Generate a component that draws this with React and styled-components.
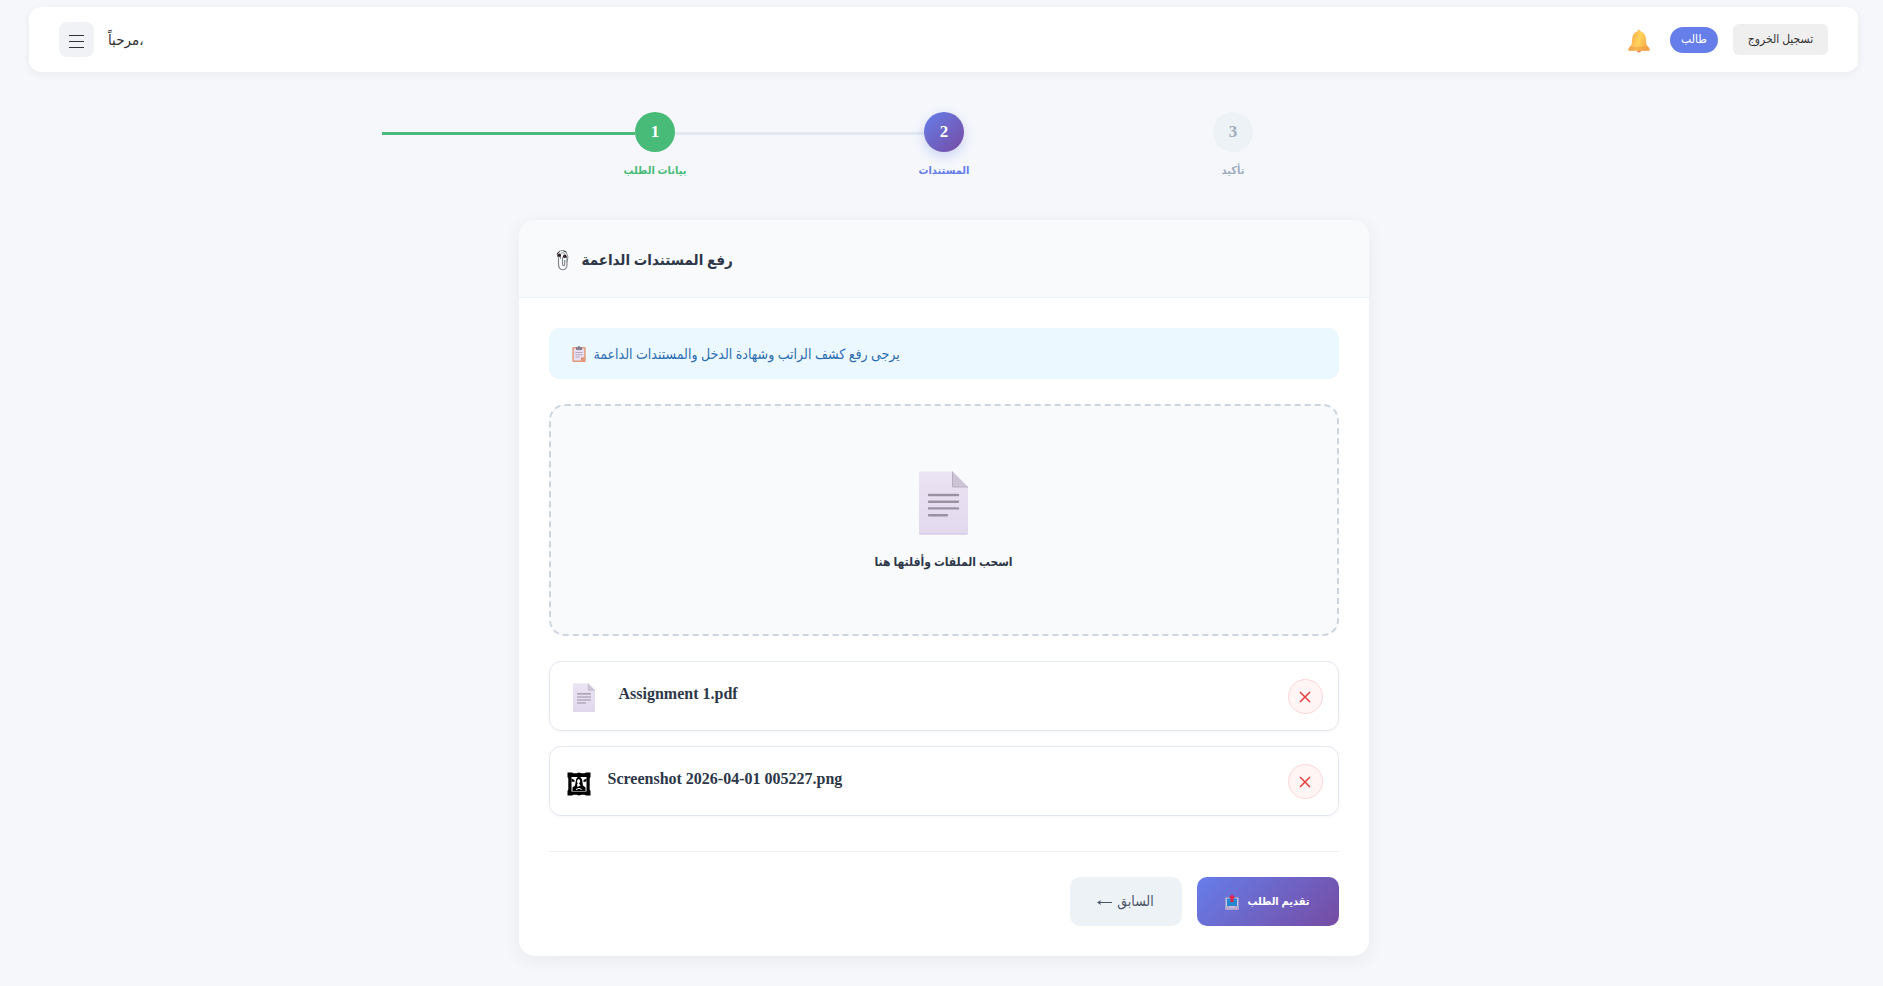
import React, { useState } from "react";
import styled, { createGlobalStyle, css } from "styled-components";

const GlobalStyle = createGlobalStyle`
	* {
		box-sizing: border-box;
	}

	body {
		margin: 0;
		background: #f5f7fb;
		color: #2d3748;
		font-family: "Liberation Serif", "DejaVu Sans Condensed", "DejaVu Sans", serif;
		font-size: 14px;
	}

	button {
		font-family: inherit;
		cursor: pointer;
	}
`;

const BellIcon = () => (
	<svg width="24" height="24" viewBox="0 0 24 24" aria-hidden="true">
		<defs>
			<linearGradient id="bell" x1="0" x2="1" y1="0" y2="0.3">
				<stop offset="0" stopColor="#f39a4c" />
				<stop offset="0.6" stopColor="#ffd35c" />
				<stop offset="1" stopColor="#f9ab45" />
			</linearGradient>
		</defs>
		<circle cx="12" cy="21.300" r="2.200" fill="#e8885a" />
		<path d="M12 .8c1 0 1.600.7 1.700 1.700 3.300.7 4.800 3.500 5.100 7l.5 5.500c.3 1.800 3.200 3 3.200 5v1.800H1.500V20c0-2 2.900-3.200 3.200-5l.5-5.500c.3-3.500 1.800-6.300 5.100-7C10.400 1.500 11 .8 12 .8z" fill="url(#bell)" />
		<path d="M3.200 17.800h17.600l1.700 2.200v1.800h-21V20z" fill="#ee9548" opacity=".5" />
	</svg>
);

const DocumentIcon = ({ width, height }) => (
	<svg width={width} height={height} viewBox="0 0 49 64" aria-hidden="true">
		<defs>
			<linearGradient id="paper" x1="0" x2="0" y1="0" y2="1">
				<stop offset="0" stopColor="#ebe4f3" />
				<stop offset="1" stopColor="#e2d8ee" />
			</linearGradient>
		</defs>
		<path d="M1.500 0.500H33.500L49 16V62a1.500 1.500 0 0 1-1.500 1.500h-46A1.500 1.500 0 0 1 0 62V2A1.500 1.500 0 0 1 1.500.5z" fill="url(#paper)" />
		<path d="M.5 63h48" stroke="#d3c6e2" />
		<path d="M33.500.5 49 16H34.500a1 1 0 0 1-1-1z" fill="#cdc5d4" />
		<path d="M33.500.5V16H49" fill="none" stroke="#b7aec2" />
		<path d="M10 24h29M10 30.700h29M10 37.400h29M10 44.200h18" stroke="#9b91a3" strokeWidth="2.400" strokeLinecap="round" />
	</svg>
);

const PictureIcon = () => (
	<svg width="24" height="24" viewBox="0 0 24 24" aria-hidden="true">
		<path d="M.5.5h4.500l1.500.8h3L12 .5l2.500.8h3L19 .5h4.500V5l-.8 1.500v11l.8 1.500v4.500H19l-1.500-.8h-3l-2.500.8-2.500-.8h-3L5 23.500H.5V19l.8-1.500v-11L.5 5z" fill="#000" />
		<path d="M4.500 5h15v14.500h-15z" fill="#fff" />
		<path d="M4.500 6.500l3 1.500v2l-3-.5zM19.500 6.500l-3 1.500v2l3-.5z" fill="#000" />
		<path d="M5.500 19v-3.500l2.500-2 .8-4.500c.3-2.500 1.500-4.200 3.200-4.200s3 1.700 3.300 4.200l.7 4.500 2.500 2V19z" fill="#000" />
		<path d="M10.800 7.500c1.600-1 2.600.5 2.200 2.500l-1 1.500 1.500 2-3 1.500-.5-2 .7-1.500c-.8-1.300-.8-3 .1-4z" fill="#fff" />
		<path d="M9 17.500l3-1.200 2.500 1.200" fill="none" stroke="#fff" />
	</svg>
);

const ClipsIcon = () => (
	<svg width="14" height="22" viewBox="0 0 14 22" fill="none" aria-hidden="true">
		<path d="M2.500 8v7c0 7.500 8.500 7.500 8.500 1V10c0-3.500-4.500-3.500-4.500 0v5c0 2.200 2.200 2.200 2.200 0v-4" stroke="#84898f" strokeWidth="1.200" />
		<path d="M1.500 8V5c0-4 8-5 9-1l1.500 4-1 5M4.500 10V5.500C5 3.500 8 3 8.500 5" stroke="#8b8f94" />
		<circle cx="3.300" cy="6.300" r="1.700" fill="#2c1e20" />
		<circle cx="8.800" cy="7.300" r="1.700" fill="#2c1e20" />
		<path d="M.8 5l3-2.500M7.500 2l3 1.200" stroke="#34363a" />
	</svg>
);

const ClipboardIcon = () => (
	<svg width="14" height="16" viewBox="0 0 14 16" aria-hidden="true">
		<rect x=".3" y="1" width="13.400" height="15" rx="1" fill="#e39a78" />
		<path d="M1.800 2.500h10.400v9l-3 3H1.800z" fill="#e9ddf1" />
		<path d="M12.200 11.500l-3 3v-3z" fill="#d97b52" />
		<path d="M4 2V1.200h1.500C5.600-.2 8.400-.2 8.500 1.200H10V4H4z" fill="#83808f" />
		<path d="M3.500 6.500h7M3.500 8.800h7M3.500 11h4" stroke="#b5a9c2" />
	</svg>
);

const OutboxIcon = () => (
	<svg width="14" height="16" viewBox="0 0 14 16" aria-hidden="true">
		<path d="M.5 3.500h13V15.500H.5z" fill="#c8c4df" />
		<path d="M2 4.500h10V12H2z" fill="#2587cf" />
		<path d="M.5 12H4l1 1.500h4l1-1.500h3.500v3.500H.5z" fill="#b9a9cc" />
		<path d="M7 .5 10.200 4H8.500v4h-3V4H3.800z" fill="#e5214f" />
	</svg>
);

const CloseIcon = () => (
	<svg width="12" height="12" viewBox="0 0 12 12" aria-hidden="true">
		<path d="M1 1l10 10M11 1L1 11" stroke="#e53e3e" strokeWidth="1.500" />
	</svg>
);

const MenuIcon = () => (
	<svg width="15" height="15" viewBox="0 0 15 15" aria-hidden="true">
		<path d="M0 1.500h15M0 7.500h15M0 13.500h15" stroke="#333" strokeWidth="1.200" />
	</svg>
);

const ArrowIcon = () => (
	<svg width="15" height="8" viewBox="0 0 15 8" aria-hidden="true">
		<path d="M1 4.500h14" stroke="#4a5568" />
		<path d="M0 4.500l4-2.500-1 2.500 1 2.500z" fill="#4a5568" />
	</svg>
);

const STEPS = [
	{ number: 1, label: "بيانات الطلب", status: "done" },
	{ number: 2, label: "المستندات", status: "active" },
	{ number: 3, label: "تأكيد", status: "todo" },
];

const FILES = [
	{ name: "Assignment 1.pdf", type: "pdf" },
	{ name: "Screenshot 2026-04-01 005227.png", type: "image" },
];

const App = () => {
	const [files, setFiles] = useState(FILES);

	const removeFile = (name) => setFiles(files.filter((file) => file.name !== name));

	return (
		<>
			<GlobalStyle />
			<Page>
				<TopBar>
					<BarGroup $gap={14}>
						<MenuButton type="button" aria-label="القائمة">
							<MenuIcon />
						</MenuButton>
						<Greeting>مرحباً،</Greeting>
					</BarGroup>
					<BarGroup $gap={15}>
						<BellButton type="button" aria-label="الإشعارات">
							<BellIcon />
						</BellButton>
						<RoleBadge>طالب</RoleBadge>
						<LogoutButton type="button">تسجيل الخروج</LogoutButton>
					</BarGroup>
				</TopBar>

				<Stepper>
					{STEPS.map((step) => (
						<Step key={step.number} $lead={step.number === 1}>
							<Connector $status={step.status} />
							<StepCircle $status={step.status}>{step.number}</StepCircle>
							<StepLabel $status={step.status}>{step.label}</StepLabel>
						</Step>
					))}
				</Stepper>

				<Card>
					<CardHeader>
						<ClipsIcon />
						<CardTitle>رفع المستندات الداعمة</CardTitle>
					</CardHeader>
					<CardBody>
						<InfoBox>
							<ClipboardIcon />
							<span>يرجى رفع كشف الراتب وشهادة الدخل والمستندات الداعمة</span>
						</InfoBox>

						<DropZone type="button">
							<DocumentIcon width={49} height={64} />
							<span>اسحب الملفات وأفلتها هنا</span>
						</DropZone>

						<FileList>
							{files.map((file) => (
								<FileRow key={file.name}>
									<FileIcon $wide={file.type === "pdf"}>
										{file.type === "pdf" ? <DocumentIcon width={22} height={29} /> : <PictureIcon />}
									</FileIcon>
									<FileName>{file.name}</FileName>
									<RemoveButton type="button" aria-label={`حذف ${file.name}`} onClick={() => removeFile(file.name)}>
										<CloseIcon />
									</RemoveButton>
								</FileRow>
							))}
						</FileList>

						<Actions>
							<BackButton type="button">
								<ArrowIcon />
								<span>السابق</span>
							</BackButton>
							<SubmitButton type="button">
								<OutboxIcon />
								<span>تقديم الطلب</span>
							</SubmitButton>
						</Actions>
					</CardBody>
				</Card>
			</Page>
		</>
	);
};

const Page = styled.main`
	min-height: 100vh;
	padding: 7px 25px 30px 29px;
`;

const TopBar = styled.header`
	display: flex;
	align-items: center;
	justify-content: space-between;
	height: 65px;
	padding: 0 30px;
	background: #fff;
	border-radius: 12px;
	box-shadow: 0 2px 8px rgba(0, 0, 0, 0.06);
`;

const BarGroup = styled.div`
	display: flex;
	align-items: center;
	gap: ${(p) => p.$gap}px;
`;

const MenuButton = styled.button`
	display: flex;
	align-items: center;
	justify-content: center;
	width: 35px;
	height: 35px;
	padding: 3px 0 0;
	border: none;
	border-radius: 8px;
	background: #f0f2f5;
`;

const Greeting = styled.span`
	color: #333;
	font-size: 15px;
`;

const BellButton = styled.button`
	display: flex;
	padding: 2px 4px 0;
	border: none;
	background: none;
`;

const RoleBadge = styled.span`
	display: flex;
	align-items: center;
	justify-content: center;
	min-width: 48px;
	height: 26px;
	padding: 0 10px;
	border-radius: 20px;
	background: #667eea;
	color: #fff;
	font-size: 12px;
`;

const LogoutButton = styled.button`
	min-width: 95px;
	height: 31px;
	padding: 0 14px;
	border: none;
	border-radius: 6px;
	background: #efefef;
	color: #333;
	font-size: 12px;
`;

const Stepper = styled.ol`
	display: flex;
	max-width: 1123px;
	margin: 40px auto;
	padding: 0 250px 0 0;
	list-style: none;
`;

const Step = styled.li`
	display: grid;
	grid-template-columns: 1fr 40px;
	flex: 0 1 ${(p) => (p.$lead ? 293 : 289)}px;
	row-gap: 8px;
	align-items: center;
`;

const connectorColors = {
	done: "#48bb78",
	active: "#e2e8f0",
	todo: "transparent",
};

const Connector = styled.span`
	height: 3px;
	margin-top: 3px;
	background: ${(p) => connectorColors[p.$status]};
`;

const circleStyles = {
	done: css`
		background: #48bb78;
		color: #fff;
	`,
	active: css`
		background: linear-gradient(135deg, #667eea 0%, #764ba2 100%);
		color: #fff;
		box-shadow: 0 4px 12px rgba(102, 126, 234, 0.3);
	`,
	todo: css`
		background: #edf2f7;
		color: #a0aec0;
	`,
};

const StepCircle = styled.span`
	display: flex;
	align-items: center;
	justify-content: center;
	width: 40px;
	height: 40px;
	border-radius: 50%;
	font-size: 17px;
	font-weight: bold;
	${(p) => circleStyles[p.$status]}
`;

const labelColors = {
	done: "#48bb78",
	active: "#667eea",
	todo: "#a0aec0",
};

const StepLabel = styled.span`
	grid-column: 2;
	justify-self: center;
	color: ${(p) => labelColors[p.$status]};
	font-size: 11px;
	font-weight: bold;
	line-height: 20px;
	white-space: nowrap;
`;

const Card = styled.section`
	max-width: 850px;
	margin: 0 auto;
	overflow: hidden;
	border-radius: 16px;
	background: #fff;
	box-shadow: 0 4px 20px rgba(0, 0, 0, 0.06);
`;

const CardHeader = styled.div`
	display: flex;
	align-items: center;
	gap: 12px;
	height: 78px;
	padding: 2px 37px 0;
	border-bottom: 1px solid #edf2f7;
	background: #f9fafc;
`;

const CardTitle = styled.h1`
	margin: 0;
	font-size: 15px;
	font-weight: bold;
`;

const CardBody = styled.div`
	padding: 30px;
`;

const InfoBox = styled.div`
	display: flex;
	align-items: center;
	gap: 8px;
	height: 51px;
	margin-bottom: 25px;
	padding: 1px 23px 0;
	border-radius: 10px;
	background: #ebf8ff;
	color: #2b6cb0;
	font-size: 14px;
`;

const DropZone = styled.button`
	display: flex;
	flex-direction: column;
	align-items: center;
	justify-content: center;
	gap: 20px;
	width: 100%;
	height: 232px;
	margin-bottom: 25px;
	border: 2px dashed #cbd5e0;
	border-radius: 16px;
	background: #f9fafc;
	color: #2d3748;
	font-size: 12px;
	font-weight: bold;
`;

const FileList = styled.ul`
	display: flex;
	flex-direction: column;
	gap: 15px;
	margin: 0;
	padding: 0;
	list-style: none;
`;

const FileRow = styled.li`
	display: flex;
	align-items: center;
	gap: 17px;
	height: 70px;
	padding: 0 15px 0 17px;
	border: 1px solid #e2e8f0;
	border-radius: 12px;
	background: #fff;
	box-shadow: 0 1px 3px rgba(0, 0, 0, 0.04);
`;

const FileIcon = styled.span`
	display: flex;
	justify-content: center;
	width: ${(p) => (p.$wide ? 35 : 24)}px;
	padding-top: ${(p) => (p.$wide ? 3 : 6)}px;
`;

const FileName = styled.span`
	flex: 1;
	padding-bottom: 4px;
	font-size: 16px;
	font-weight: bold;
`;

const RemoveButton = styled.button`
	display: flex;
	align-items: center;
	justify-content: center;
	width: 35px;
	height: 35px;
	padding: 2px 0 0;
	border: 1px solid #fed7d7;
	border-radius: 50%;
	background: #fff5f5;
`;

const Actions = styled.div`
	display: flex;
	justify-content: flex-end;
	gap: 15px;
	margin-top: 35px;
	padding-top: 25px;
	border-top: 1px solid #edf2f7;
`;

const ActionButton = styled.button`
	display: flex;
	align-items: center;
	justify-content: center;
	height: 49px;
	border: none;
	border-radius: 10px;
`;

const BackButton = styled(ActionButton)`
	gap: 5px;
	width: 112px;
	background: #edf2f7;
	color: #4a5568;
	font-size: 14px;
`;

const SubmitButton = styled(ActionButton)`
	gap: 8px;
	width: 142px;
	background: linear-gradient(135deg, #667eea 0%, #764ba2 100%);
	color: #fff;
	font-size: 11px;
	font-weight: bold;
`;

export default App;
